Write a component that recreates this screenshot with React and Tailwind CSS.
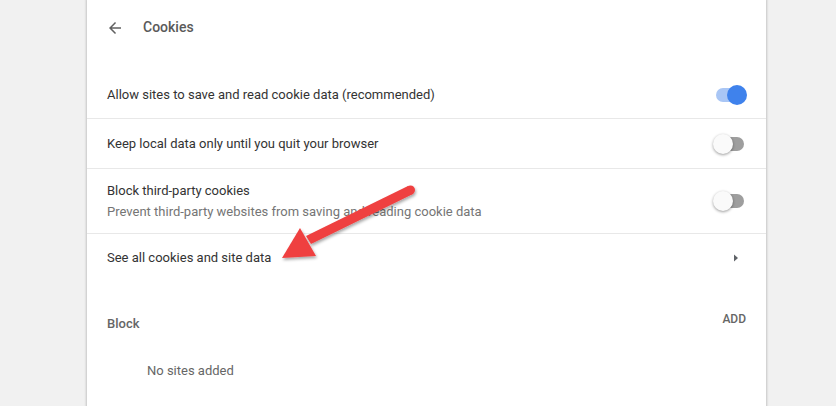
import React from "react";

function Toggle({ on }) {
  return (
    <div className="relative w-[34px] h-[20px] flex items-center">
      <div className={`absolute left-[3px] right-[3px] h-[14px] rounded-full ${on ? "bg-[#a9c6f5]" : "bg-[#9e9e9e]"}`} />
      <div
        className={`absolute top-0 w-[20px] h-[20px] rounded-full ${on ? "right-0 bg-[#3f82ec]" : "left-0 bg-[#fafafa] shadow-[0_1px_3px_rgba(0,0,0,0.4)]"}`}
      />
    </div>
  );
}

function Row({ children, right, className = "" }) {
  return (
    <div className={`flex items-center justify-between pl-[20px] pr-[19px] border-b border-[#e8e8e8] ${className}`}>
      <div>{children}</div>
      {right}
    </div>
  );
}

export default function App() {
  return (
    <div className="w-[836px] h-[406px] bg-[#f1f1f1] overflow-hidden relative" style={{ fontFamily: "Roboto, 'Liberation Sans', sans-serif" }}>
      <div className="ml-[87px] w-[679px] h-[420px] bg-white shadow-[0_0_2px_1px_rgba(0,0,0,0.18)] text-[13px] text-[#333]">
        <div className="h-[55px] flex items-center pl-[19px]">
          <svg width="18" height="18" viewBox="0 0 24 24">
            <path d="M20 11H7.83l5.59-5.59L12 4l-8 8 8 8 1.41-1.41L7.83 13H20v-2z" fill="#616161" />
          </svg>
          <span className="ml-[19px] text-[14px] font-medium text-[#5a5a5a]">Cookies</span>
        </div>
        <div className="h-[17px]" />
        <Row className="h-[47px]" right={<Toggle on />}>Allow sites to save and read cookie data (recommended)</Row>
        <Row className="h-[50px]" right={<Toggle />}>Keep local data only until you quit your browser</Row>
        <Row className="h-[65px]" right={<Toggle />}>
          <div>Block third-party cookies</div>
          <div className="text-[#757575] mt-[1px]">Prevent third-party websites from saving and reading cookie data</div>
        </Row>
        <div className="h-[47px] flex items-center justify-between pl-[20px] pr-[27px]">
          <span>See all cookies and site data</span>
          <svg width="6" height="10" viewBox="0 0 6 10">
            <path d="M1 1.5 L5 5 L1 8.5 Z" fill="#5f6368" />
          </svg>
        </div>
        <div className="h-[31px]" />
        <div className="flex items-start justify-between pl-[20px] pr-[20px]">
          <span className="text-[#666] font-medium mt-[2px]">Block</span>
          <span className="text-[12px] text-[#666] font-medium -mt-[2px]">ADD</span>
        </div>
        <div className="pl-[60px] mt-[27px] text-[#666]">No sites added</div>
      </div>
      <svg className="absolute left-0 top-0 pointer-events-none" width="836" height="406">
        <defs>
          <filter id="sh" x="-20%" y="-20%" width="140%" height="140%">
            <feDropShadow dx="1" dy="2" stdDeviation="1.5" floodColor="#000" floodOpacity="0.35" />
          </filter>
        </defs>
        <g filter="url(#sh)" fill="#ef4040">
          <path d="M408 186 L413 194 L311 244 L306 236 Z" />
          <path d="M300 228 L316 256 L282 258 Z" />
          <circle cx="410.5" cy="190" r="4.5" />
        </g>
      </svg>
    </div>
  );
}
